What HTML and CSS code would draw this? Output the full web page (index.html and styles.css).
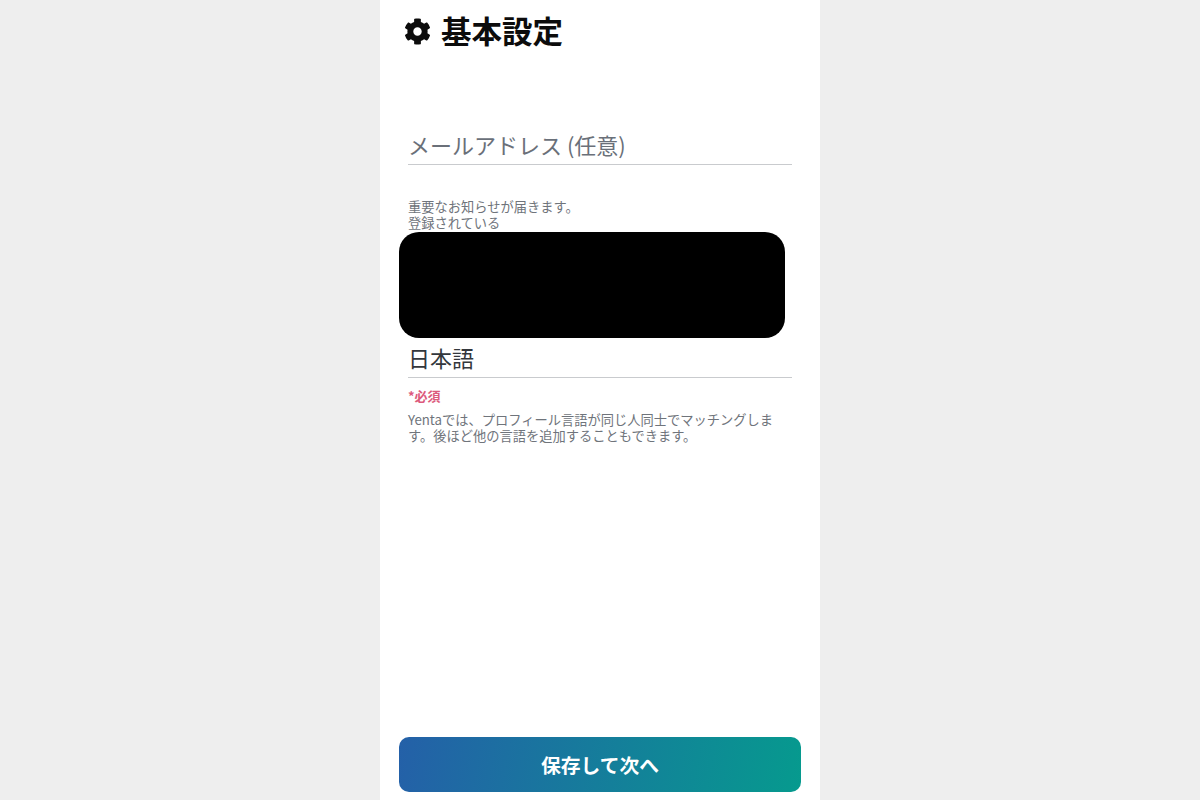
FILE: index.html
```html
<!DOCTYPE html>
<html lang="ja">
<head>
    <meta charset="UTF-8">
    <title>基本設定</title>
    <link rel="stylesheet" href="styles.css">
</head>
<body>
    <div class="page">
        <h1 class="title">
            <svg class="gear" viewBox="0 0 512 512"><path d="M487.4 315.7l-42.6-24.6c4.3-23.2 4.3-47 0-70.2l42.6-24.6c4.9-2.8 7.1-8.6 5.5-14-11.1-35.6-30-67.8-54.7-94.6-3.8-4.1-10-5.1-14.8-2.3L380.8 110c-17.9-15.4-38.5-27.3-60.8-35.1V25.8c0-5.6-3.9-10.5-9.4-11.7-36.7-8.2-74.3-7.8-109.2 0-5.5 1.2-9.4 6.1-9.4 11.7V75c-22.2 7.9-42.8 19.8-60.8 35.1L88.7 85.5c-4.9-2.8-11-1.9-14.8 2.3-24.7 26.7-43.6 58.9-54.7 94.6-1.7 5.4.6 11.2 5.5 14L67.3 221c-4.3 23.2-4.3 47 0 70.2l-42.6 24.6c-4.9 2.8-7.1 8.6-5.5 14 11.1 35.6 30 67.8 54.7 94.6 3.8 4.1 10 5.1 14.8 2.3l42.6-24.6c17.9 15.4 38.5 27.3 60.8 35.1v49.2c0 5.6 3.9 10.5 9.4 11.7 36.7 8.2 74.3 7.8 109.2 0 5.5-1.2 9.4-6.1 9.4-11.7v-49.2c22.2-7.9 42.8-19.8 60.8-35.1l42.6 24.6c4.9 2.8 11 1.9 14.8-2.3 24.7-26.7 43.6-58.9 54.7-94.6 1.5-5.5-.7-11.3-5.6-14.1zM256 336c-44.1 0-80-35.9-80-80s35.9-80 80-80 80 35.9 80 80-35.9 80-80 80z"/></svg>
            <span>基本設定</span>
        </h1>

        <div class="field field-email">メールアドレス (任意)</div>
        <p class="help help-email">重要なお知らせが届きます。</p>
        <p class="help">登録されている</p>

        <div class="field field-lang">日本語</div>
        <p class="required">*必須</p>
        <p class="help help-lang">Yentaでは、プロフィール言語が同じ人同士でマッチングします。後ほど他の言語を追加することもできます。</p>

        <button class="save-btn" type="button">保存して次へ</button>

        <div class="redaction"></div>
    </div>
</body>
</html>
```

FILE: styles.css
```css
body {
    margin: 0;
    background-color: #eeeeee;
    font-family: "Noto Sans CJK JP", sans-serif;
}
.page {
    position: relative;
    display: flex;
    flex-direction: column;
    box-sizing: border-box;
    width: 440px;
    height: 800px;
    margin: 0 auto;
    padding: 0 28px 8px;
    background-color: #ffffff;
}
.title {
    display: flex;
    align-items: center;
    gap: 10px;
    height: 60px;
    margin: 0 0 4px -4px;
    font-size: 30.5px;
    font-weight: 700;
    color: #0c0c0c;
}
.gear {
    width: 27px;
    height: 27px;
    margin-top: 3px;
    fill: #0c0c0c;
}
.field {
    height: 40px;
    line-height: 38px;
    box-sizing: border-box;
    border-bottom: 1px solid #c9cbce;
    font-size: 22px;
}
.field-email {
    margin-top: 61px;
    color: #6a7079;
}
.field-lang {
    margin-top: 107px;
    color: #33373c;
}
.help {
    margin: 0;
    font-size: 13.25px;
    line-height: 16px;
    color: #6f747b;
}
.help-email {
    margin-top: 34px;
}
.help-lang {
    width: 375px;
}
.required {
    margin: 10px 0 8px;
    font-size: 13px;
    line-height: 16px;
    font-weight: 700;
    color: #dc5a7c;
}
.save-btn {
    align-self: center;
    width: 402px;
    height: 55px;
    margin-top: auto;
    border: none;
    border-radius: 10px;
    background: linear-gradient(100deg, #2460a8, #069a8e);
    color: #ffffff;
    font-family: inherit;
    font-size: 19.8px;
    font-weight: 700;
}
.redaction {
    position: absolute;
    left: 19px;
    top: 232px;
    width: 386px;
    height: 106px;
    border-radius: 20px;
    background-color: #000000;
}
```
